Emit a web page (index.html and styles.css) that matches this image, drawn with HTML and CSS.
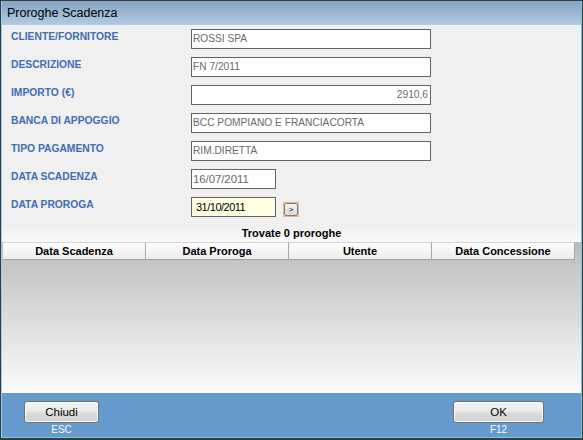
FILE: index.html
```html
<!DOCTYPE html>
<html>
<head>
<meta charset="utf-8">
<link rel="stylesheet" href="styles.css">
</head>
<body>
<div class="window">
  <div class="frame">
    <div class="titlebar">Proroghe Scadenza</div>
    <div class="form">
      <div class="row"><span class="label">CLIENTE/FORNITORE</span><div class="field wide">ROSSI SPA</div></div>
      <div class="row"><span class="label">DESCRIZIONE</span><div class="field wide">FN 7/2011</div></div>
      <div class="row"><span class="label">IMPORTO (€)</span><div class="field wide num">2910,6</div></div>
      <div class="row"><span class="label">BANCA DI APPOGGIO</span><div class="field wide">BCC POMPIANO E FRANCIACORTA</div></div>
      <div class="row"><span class="label">TIPO PAGAMENTO</span><div class="field wide">RIM.DIRETTA</div></div>
      <div class="row"><span class="label">DATA SCADENZA</span><div class="field date">16/07/2011</div></div>
      <div class="row"><span class="label">DATA PROROGA</span><div class="field date edit">31/10/2011</div><div class="go"><span class="go-inner">&gt;</span></div></div>
    </div>
    <div class="count">Trovate 0 proroghe</div>
    <div class="grid">
      <div class="grid-head">
        <div class="hcell">Data Scadenza</div>
        <div class="hcell">Data Proroga</div>
        <div class="hcell">Utente</div>
        <div class="hcell">Data Concessione</div>
      </div>
      <div class="grid-body"></div>
    </div>
    <div class="footer">
      <div class="action">
        <div class="btn btn-close">Chiudi</div>
        <div class="key">ESC</div>
      </div>
      <div class="action">
        <div class="btn btn-ok">OK</div>
        <div class="key">F12</div>
      </div>
    </div>
  </div>
</div>
</body>
</html>
```
FILE: styles.css
```css
html, body {
  margin: 0;
  padding: 0;
  background: #ffffff;
}
body {
  font-family: "Liberation Sans", Arial, sans-serif;
}
.window {
  width: 583px;
  height: 440px;
  box-sizing: border-box;
  border: 1px solid #3a3a3a;
  border-bottom-width: 2px;
  background: #f0f0f0;
}
.frame {
  height: 100%;
  box-sizing: border-box;
  border-left: 1px solid #8fd0ee;
  border-right: 1px solid #6fcbee;
  border-bottom: 1px solid #6fcbee;
  display: flex;
  flex-direction: column;
}
.titlebar {
  height: 24px;
  flex: none;
  box-sizing: border-box;
  padding-left: 5px;
  line-height: 25px;
  font-size: 12.5px;
  color: #000;
  background: linear-gradient(#87a4c4, #b2cae4);
}
.form {
  flex: none;
  padding: 4px 0 0 9px;
  display: flex;
  flex-direction: column;
  gap: 8px;
}
.row {
  display: flex;
  align-items: flex-start;
  height: 20px;
}
.label {
  width: 180px;
  flex: none;
  padding-top: 1px;
  font-size: 10.3px;
  line-height: 13px;
  font-weight: bold;
  color: #3e6eb4;
}
.field {
  height: 20px;
  box-sizing: border-box;
  border: 1px solid #646464;
  background: #ffffff;
  font-size: 10.2px;
  line-height: 18px;
  color: #6a6a6a;
  padding: 0 2px 0 1px;
  white-space: nowrap;
}
.field.wide { width: 240px; }
.field.date {
  width: 85px;
  padding-left: 1px;
  font-size: 11.5px;
  letter-spacing: -0.1px;
}
.field.num { text-align: right; }
.field.edit {
  background: #ffffe1;
  color: #000;
  padding-left: 4px;
  font-size: 11px;
  letter-spacing: -0.5px;
}
.go {
  margin: 5px 0 0 7px;
  width: 16px;
  height: 15px;
  box-sizing: border-box;
  border: 1px solid #f2b07a;
  display: flex;
}
.go-inner {
  flex: 1;
  border: 1px solid #7a7a7a;
  border-radius: 2px;
  background: linear-gradient(#f6f6f6, #d6d6d6);
  font-size: 8px;
  line-height: 11px;
  text-align: center;
  color: #000;
}
.count {
  flex: none;
  margin-top: 10px;
  height: 15px;
  line-height: 13px;
  text-align: center;
  font-size: 11px;
  font-weight: bold;
  color: #000;
  background: linear-gradient(#f0f0f0, #f9f9f9);
}
.grid {
  flex: 1;
  display: flex;
  flex-direction: column;
  background: linear-gradient(#bcbcbc, #fbfbfb);
}
.grid-head {
  display: flex;
  height: 18px;
  margin-left: 1px;
  flex: none;
}
.hcell {
  width: 143px;
  box-sizing: border-box;
  border-top: 1px solid #d4d4d4;
  border-bottom: 1px solid #a0a0a0;
  border-right: 1px solid #a8a8a8;
  background: linear-gradient(#ffffff, #ececec);
  font-size: 11px;
  font-weight: bold;
  line-height: 16px;
  text-align: center;
  color: #000;
}
.grid-body {
  flex: 1;
}
.footer {
  flex: none;
  height: 44px;
  box-sizing: border-box;
  background: #6699cc;
  display: flex;
  justify-content: space-between;
  padding: 8px 37px 0 22px;
}
.action {
  display: flex;
  flex-direction: column;
  align-items: center;
}
.btn {
  height: 22px;
  box-sizing: border-box;
  border: 1px solid #707070;
  border-radius: 3px;
  background: linear-gradient(#f2f2f2 0%, #ebebeb 45%, #dddddd 55%, #d0d0d0 100%);
  box-shadow: inset 0 0 0 1px #fbfbfb;
  font-size: 11.5px;
  line-height: 20px;
  text-align: center;
  color: #000;
}
.btn-close { width: 75px; }
.btn-ok { width: 91px; }
.key {
  margin-top: 1px;
  font-size: 10px;
  line-height: 11px;
  color: #ffffff;
}
```
